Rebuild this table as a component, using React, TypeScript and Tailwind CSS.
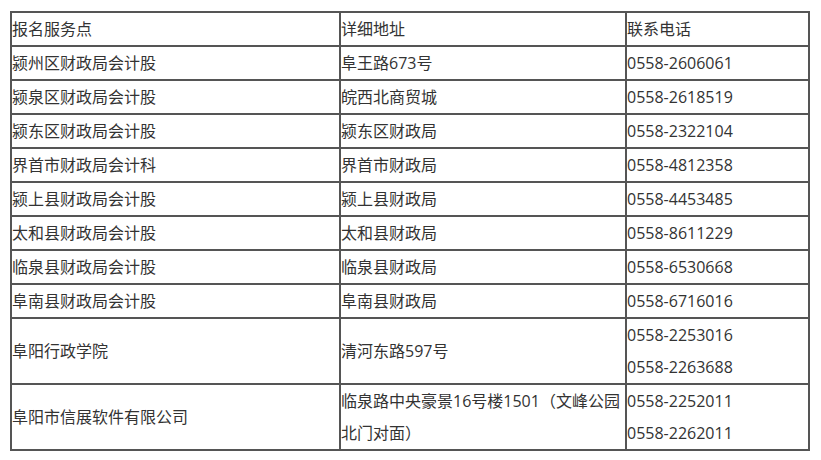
const rows: { name: string; addr: string[]; phones: string[] }[] = [
  { name: '颍州区财政局会计股', addr: ['阜王路673号'], phones: ['0558-2606061'] },
  { name: '颍泉区财政局会计股', addr: ['皖西北商贸城'], phones: ['0558-2618519'] },
  { name: '颍东区财政局会计股', addr: ['颍东区财政局'], phones: ['0558-2322104'] },
  { name: '界首市财政局会计科', addr: ['界首市财政局'], phones: ['0558-4812358'] },
  { name: '颍上县财政局会计股', addr: ['颍上县财政局'], phones: ['0558-4453485'] },
  { name: '太和县财政局会计股', addr: ['太和县财政局'], phones: ['0558-8611229'] },
  { name: '临泉县财政局会计股', addr: ['临泉县财政局'], phones: ['0558-6530668'] },
  { name: '阜南县财政局会计股', addr: ['阜南县财政局'], phones: ['0558-6716016'] },
  { name: '阜阳行政学院', addr: ['清河东路597号'], phones: ['0558-2253016', '0558-2263688'] },
  {
    name: '阜阳市信展软件有限公司',
    addr: ['临泉路中央豪景16号楼1501（文峰公园', '北门对面）'],
    phones: ['0558-2252011', '0558-2262011'],
  },
];

const cell = 'border-2 border-[#555] p-0 align-middle text-left font-normal whitespace-nowrap';

export default function App() {
  return (
    <div className="w-[821px] h-[460px] bg-white pt-[11px] pl-[10px] text-[16px] leading-[32px] text-[#333] font-['Open_Sans','Noto_Sans_CJK_SC',sans-serif]">
      <table className="border-collapse w-[800px]">
        <thead>
          <tr>
            <th className={`${cell} w-[329px]`}>报名服务点</th>
            <th className={`${cell} w-[286px]`}>详细地址</th>
            <th className={cell}>联系电话</th>
          </tr>
        </thead>
        <tbody>
          {rows.map((r) => (
            <tr key={r.name}>
              <td className={cell}>{r.name}</td>
              <td className={cell}>
                {r.addr.map((a) => (
                  <div key={a}>{a}</div>
                ))}
              </td>
              <td className={cell}>
                {r.phones.map((p) => (
                  <div key={p}>{p}</div>
                ))}
              </td>
            </tr>
          ))}
        </tbody>
      </table>
    </div>
  );
}
